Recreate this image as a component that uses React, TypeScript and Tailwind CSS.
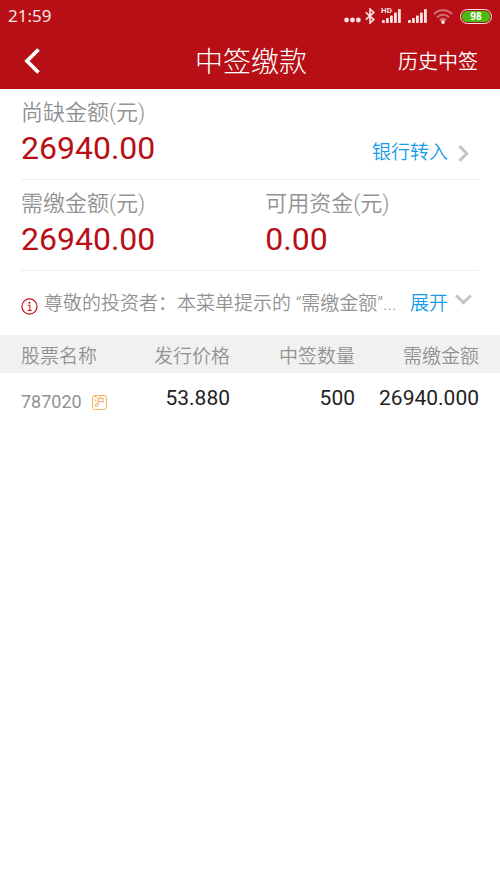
import React from "react";

const stocks = [{ code: "787020", market: "沪", price: "53.880", quantity: "500", amount: "26940.000" }];

function SignalBars() {
  return (
    <svg viewBox="0 0 19 14" className="h-[14px] w-[19px]" fill="currentColor" aria-hidden="true">
      <rect x="0" y="11" width="2.8" height="3" rx="0.8" />
      <rect x="4" y="9" width="2.8" height="5" rx="0.8" />
      <rect x="8" y="6.5" width="2.8" height="7.5" rx="0.8" />
      <rect x="12" y="3.5" width="2.8" height="10.5" rx="0.8" />
      <rect x="16" y="0" width="2.8" height="14" rx="0.8" />
    </svg>
  );
}

function StatusBar() {
  return (
    <div className="flex h-8 items-center justify-between pr-2 pl-2 text-[#f8e4e5]">
      <span className="font-['Noto_Sans',sans-serif] text-[17px] leading-6">21:59</span>
      <div className="flex items-center">
        <svg viewBox="0 0 17 6" className="mt-2 h-[6px] w-[17px]" fill="currentColor" aria-hidden="true">
          <circle cx="2.6" cy="3" r="2.4" />
          <circle cx="8.5" cy="3" r="2.4" />
          <circle cx="14.4" cy="3" r="2.4" />
        </svg>
        <svg viewBox="0 0 10 16" className="ml-1 h-4 w-[10px]" fill="none" stroke="currentColor" strokeWidth="1.6" aria-hidden="true">
          <path d="M0.8 4.4 L8.8 11.6 L5 15 V1 L8.8 4.4 L0.8 11.6" />
        </svg>
        <div className="relative ml-[7px]">
          <SignalBars />
          <span className="absolute -top-[2px] -left-[1px] font-['Roboto',sans-serif] text-[8px] leading-[8px] font-bold">HD</span>
        </div>
        <div className="ml-[7px]">
          <SignalBars />
        </div>
        <svg viewBox="0 0 20 15" className="ml-[6px] h-[15px] w-5" fill="none" stroke="currentColor" strokeWidth="2" aria-hidden="true">
          <path d="M1 5 C6 0 14 0 19 5" opacity="0.45" />
          <path d="M4 8.2 C7.4 5 12.6 5 16 8.2" opacity="0.45" />
          <path d="M6.8 11.2 C8.7 9.4 11.3 9.4 13.2 11.2" opacity="0.45" />
          <circle cx="10" cy="13" r="1.9" fill="currentColor" stroke="none" />
        </svg>
        <div className="ml-[7px] flex h-[15px] w-8 rounded-full border border-[#f8e4e5] p-px">
          <span className="flex flex-1 items-center justify-center rounded-full bg-[#49bd12] font-['Noto_Sans',sans-serif] text-[10px] leading-[11px] font-bold text-white">
            98
          </span>
        </div>
      </div>
    </div>
  );
}

function Amount({ label, value }: { label: string; value: string }) {
  return (
    <dl>
      <dt className="text-[22px] leading-8 font-[350] text-[#929292]">{label}</dt>
      <dd className="text-[32px] leading-[38px] text-[#b70f15]">{value}</dd>
    </dl>
  );
}

export default function App() {
  return (
    <div className="min-h-screen bg-white font-['Roboto','Noto_Sans_CJK_SC',sans-serif]">
      <header className="bg-[#b70f15]">
        <StatusBar />
        <nav className="grid h-[57px] grid-cols-[1fr_auto_1fr] items-center pr-[22px] pl-6 text-white">
          <button type="button" aria-label="返回" className="w-4">
            <svg viewBox="0 0 16 26" className="h-[26px] w-4" fill="none" stroke="currentColor" strokeWidth="3.8">
              <path d="M14.5 1.5 L3 13 L14.5 24.5" />
            </svg>
          </button>
          <h1 className="pt-1 text-[28px] leading-10 font-light">中签缴款</h1>
          <a href="#history" className="pt-[2px] justify-self-end text-[20px] leading-8 font-[350]">
            历史中签
          </a>
        </nav>
      </header>

      <main>
        <section className="mx-[21px] flex justify-between border-b border-[#eee] pt-2 pr-[10px] pb-3">
          <Amount label="尚缺金额(元)" value="26940.00" />
          <a href="#transfer" className="flex items-center gap-[10px] self-end text-[19px] leading-7 font-[350] text-[#149cea]">
            银行转入
            <svg viewBox="0 0 11 17" className="h-[17px] w-[11px] text-[#c4c4c8]" fill="none" stroke="currentColor" strokeWidth="3" aria-hidden="true">
              <path d="M1.5 1.2 L8.8 8.5 L1.5 15.8" />
            </svg>
          </a>
        </section>

        <section className="mx-[21px] grid grid-cols-[8fr_7fr] border-b border-[#eee] pt-2 pb-3">
          <Amount label="需缴金额(元)" value="26940.00" />
          <Amount label="可用资金(元)" value="0.00" />
        </section>

        <section className="flex h-16 items-center pr-7 pl-[21px] text-[19px] leading-8 font-[350]">
          <svg viewBox="0 0 18 18" className="mt-[6px] mr-[6px] h-[17px] w-[17px] shrink-0 text-[#c8141c]" fill="none" stroke="currentColor" strokeWidth="1.3" aria-hidden="true">
            <circle cx="9" cy="9" r="8" />
            <circle cx="8.9" cy="4.9" r="1.1" fill="currentColor" stroke="none" />
            <path d="M7.2 7.6 H9.4 V13 M7 13.2 H11.4" strokeWidth="1.1" />
          </svg>
          <p className="flex-1 pt-[2px] whitespace-nowrap text-[#929292]">尊敬的投资者：本菜单提示的 “需缴金额”...</p>
          <button type="button" className="flex items-center gap-[7px] pt-[2px] text-[#149cea]">
            <span>展开</span>
            <svg viewBox="0 0 17 11" className="mb-[10px] h-[11px] w-[17px] text-[#c4c4c8]" fill="none" stroke="currentColor" strokeWidth="3" aria-hidden="true">
              <path d="M1.2 1.5 L8.5 8.6 L15.8 1.5" />
            </svg>
          </button>
        </section>

        <table className="w-full table-fixed">
          <colgroup>
            <col className="w-[22%]" />
            <col className="w-[24%]" />
            <col className="w-[25%]" />
            <col className="w-[29%]" />
          </colgroup>
          <thead className="bg-[#f1f1f1] text-[19px] leading-8 text-[#929292]">
            <tr>
              <th scope="col" className="pt-[6px] pl-[21px] text-left font-[350]">股票名称</th>
              <th scope="col" className="pt-[6px] text-right font-[350]">发行价格</th>
              <th scope="col" className="pt-[6px] text-right font-[350]">中签数量</th>
              <th scope="col" className="pt-[6px] pr-[21px] text-right font-[350]">需缴金额</th>
            </tr>
          </thead>
          <tbody className="text-[21px] leading-[46px] text-[#222]">
            {stocks.map((s) => (
              <tr key={s.code}>
                <td className="pt-[6px] pl-[21px] text-[18px] text-[#929292]">
                  <span className="flex items-center gap-[10px]">
                    {s.code}
                    <span className="flex size-[15px] items-center justify-center rounded-[3px] border border-[#f5b35c] text-[11px] leading-[13px] text-[#f0a040]">
                      {s.market}
                    </span>
                  </span>
                </td>
                <td className="pb-[2px] text-right">{s.price}</td>
                <td className="pb-[2px] text-right">{s.quantity}</td>
                <td className="pr-[21px] pb-[2px] text-right">{s.amount}</td>
              </tr>
            ))}
          </tbody>
        </table>
      </main>
    </div>
  );
}
